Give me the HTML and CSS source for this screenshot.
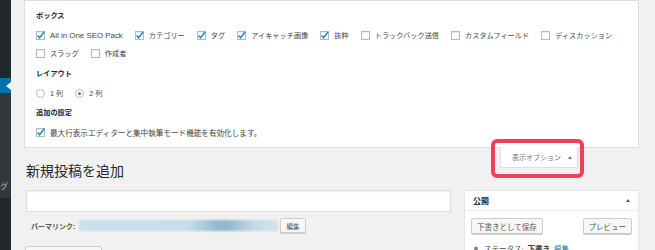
FILE: index.html
```html
<!DOCTYPE html>
<html lang="ja">
<head>
<meta charset="utf-8">
<title>新規投稿を追加</title>
<link rel="stylesheet" href="styles.css">
</head>
<body>
<div class="admin">
  <nav class="sidebar">
    <div class="menu-top"></div>
    <div class="menu-current"><span class="menu-arrow"></span></div>
    <div class="menu-sub"><span class="menu-tail">グ</span></div>
    <div class="menu-rest"></div>
  </nav>
  <main class="main">
    <section class="screen-panel">
      <div class="group">
        <h5 class="group-title">ボックス</h5>
        <div class="opt-row">
          <label class="opt"><span class="cb"><svg viewBox="0 0 9 9" class="tick"><polyline points="1.6,4.4 3.6,6.8 8.2,0.8"/></svg></span><span class="latin">All in One SEO Pack</span></label>
          <label class="opt"><span class="cb"><svg viewBox="0 0 9 9" class="tick"><polyline points="1.6,4.4 3.6,6.8 8.2,0.8"/></svg></span>カテゴリー</label>
          <label class="opt"><span class="cb"><svg viewBox="0 0 9 9" class="tick"><polyline points="1.6,4.4 3.6,6.8 8.2,0.8"/></svg></span>タグ</label>
          <label class="opt"><span class="cb"><svg viewBox="0 0 9 9" class="tick"><polyline points="1.6,4.4 3.6,6.8 8.2,0.8"/></svg></span>アイキャッチ画像</label>
          <label class="opt"><span class="cb"><svg viewBox="0 0 9 9" class="tick"><polyline points="1.6,4.4 3.6,6.8 8.2,0.8"/></svg></span>抜粋</label>
          <label class="opt"><span class="cb"></span>トラックバック送信</label>
          <label class="opt"><span class="cb"></span>カスタムフィールド</label>
          <label class="opt"><span class="cb"></span>ディスカッション</label>
        </div>
        <div class="opt-row opt-row-next">
          <label class="opt"><span class="cb"></span>スラッグ</label>
          <label class="opt"><span class="cb"></span>作成者</label>
        </div>
      </div>
      <div class="group group-layout">
        <h5 class="group-title">レイアウト</h5>
        <div class="opt-row">
          <label class="opt"><span class="rb"></span>1 列</label>
          <label class="opt"><span class="rb"><span class="rb-dot"></span></span>2 列</label>
        </div>
      </div>
      <div class="group group-extra">
        <h5 class="group-title">追加の設定</h5>
        <div class="opt-row">
          <label class="opt opt-wide"><span class="cb"><svg viewBox="0 0 9 9" class="tick"><polyline points="1.6,4.4 3.6,6.8 8.2,0.8"/></svg></span>最大行表示エディターと集中執筆モード機能を有効化します。</label>
        </div>
      </div>
    </section>

    <div class="title-row">
      <h1 class="page-title">新規投稿を追加</h1>
      <div class="screen-tab">表示オプション<span class="tab-tri"></span></div>
    </div>

    <div class="post-body">
      <div class="post-main">
        <div class="title-input"></div>
        <div class="permalink">
          <strong class="permalink-label">パーマリンク:</strong>
          <span class="permalink-url"></span>
          <span class="btn btn-mini">編集</span>
        </div>
        <div class="media-btn"></div>
      </div>
      <aside class="publish-box">
        <div class="publish-head">
          <span class="publish-title">公開</span>
          <span class="head-tri"></span>
        </div>
        <div class="publish-actions">
          <span class="btn">下書きとして保存</span>
          <span class="btn">プレビュー</span>
        </div>
        <div class="publish-status">
          <svg class="pin" viewBox="0 0 8 8"><circle cx="4" cy="2.5" r="2" fill="#82878c"/><path d="M1 8 Q1 5 4 5 Q7 5 7 8 Z" fill="#82878c"/></svg>
          <span>ステータス:</span><strong>下書き</strong><span class="link">編集</span>
        </div>
      </aside>
    </div>
  </main>
</div>
<div class="highlight"></div>
</body>
</html>
```

FILE: styles.css
```css
html, body {
  margin: 0;
  padding: 0;
}

body {
  width: 655px;
  height: 250px;
  overflow: hidden;
  background: #f1f1f1;
  font-family: "Liberation Sans", "Noto Sans CJK JP", sans-serif;
  font-size: 7.2px;
  color: #444;
  position: relative;
}

.admin {
  display: flex;
  height: 250px;
}

/* sidebar */
.sidebar {
  width: 11px;
  flex: none;
  display: flex;
  flex-direction: column;
  background: #23282d;
  overflow: hidden;
}

.menu-top {
  height: 78px;
  flex: none;
}

.menu-current {
  height: 15px;
  flex: none;
  background: #0073aa;
  display: flex;
  justify-content: flex-end;
  align-items: center;
}

.menu-arrow {
  width: 0;
  height: 0;
  border-top: 4px solid transparent;
  border-bottom: 4px solid transparent;
  border-right: 5px solid #f1f1f1;
}

.menu-sub {
  height: 105px;
  flex: none;
  background: #32373c;
  display: flex;
  justify-content: flex-end;
  align-items: flex-end;
  padding-bottom: 6px;
  box-sizing: border-box;
}

.menu-tail {
  color: #b4b9be;
  font-size: 7.7px;
  line-height: 10px;
  margin-right: 3px;
}

.menu-rest {
  flex: 1;
}

/* main */
.main {
  flex: 1;
  min-width: 0;
  padding: 0 16px 0 13px;
}

.screen-panel {
  background: #fff;
  border: 1px solid #ddd;
  padding: 9px 11px 8px;
}

.group-title {
  margin: 0 0 6px;
  font-size: 7.2px;
  line-height: 12px;
  font-weight: bold;
  color: #23282d;
}

.group-layout {
  margin-top: 8px;
}

.group-extra {
  margin-top: 7px;
}

.opt-row {
  display: flex;
  align-items: center;
  height: 14px;
}

.opt-row-next {
  margin-top: 4px;
}

.opt {
  display: flex;
  align-items: center;
  gap: 5px;
  margin-right: 12px;
  white-space: nowrap;
  color: #444;
}

.latin {
  font-size: 7.9px;
}

.opt-wide {
  font-size: 7.6px;
}

.cb {
  width: 7px;
  height: 7px;
  border: 1px solid #b4b9be;
  background: #fff;
  box-shadow: inset 0 1px 1px rgba(0, 0, 0, 0.08);
  display: flex;
}

.tick {
  width: 9px;
  height: 9px;
  margin: -1px 0 0 -1px;
  overflow: visible;
}

.tick polyline {
  fill: none;
  stroke: #1e8cbe;
  stroke-width: 1.5;
}

.rb {
  width: 7px;
  height: 7px;
  border: 1px solid #b4b9be;
  border-radius: 50%;
  background: #fff;
  display: flex;
  align-items: center;
  justify-content: center;
}

.rb-dot {
  width: 3px;
  height: 3px;
  border-radius: 50%;
  background: #1e8cbe;
}

/* title row */
.title-row {
  display: flex;
  justify-content: space-between;
  align-items: flex-start;
}

.page-title {
  margin: 14px 0 0 2px;
  font-size: 14px;
  line-height: 16px;
  font-weight: normal;
  color: #23282d;
  font-family: "Noto Sans CJK JP", sans-serif;
}

.screen-tab {
  margin: -1px 61px 0 0;
  width: 78px;
  height: 21px;
  box-sizing: border-box;
  background: #fff;
  border: 1px solid #ddd;
  border-top: none;
  display: flex;
  align-items: center;
  padding-left: 11px;
  font-size: 7px;
  color: #72777c;
}

.tab-tri {
  margin-left: 7px;
  width: 0;
  height: 0;
  border-left: 2px solid transparent;
  border-right: 2px solid transparent;
  border-bottom: 3px solid #72777c;
}

/* post body */
.post-body {
  display: flex;
  gap: 13px;
  margin-top: 12px;
  padding-left: 2px;
}

.post-main {
  width: 425px;
  flex: none;
}

.title-input {
  height: 22px;
  box-sizing: border-box;
  background: #fff;
  border: 1px solid #ddd;
  box-shadow: inset 0 1px 2px rgba(0, 0, 0, 0.07);
}

.permalink {
  display: flex;
  align-items: center;
  height: 15px;
  margin-top: 6px;
  padding-left: 5px;
}

.permalink-label {
  font-size: 7px;
  color: #555;
  font-weight: bold;
  width: 48px;
}

.permalink-url {
  width: 199px;
  height: 11px;
  background: linear-gradient(90deg, #cddfea 0%, #c9dce8 55%, #97bdd4 68%, #8fb8d0 74%, #c4d9e6 88%, #d3e3ec 100%);
  filter: blur(1px);
}

.btn {
  display: flex;
  align-items: center;
  justify-content: center;
  height: 16px;
  box-sizing: border-box;
  padding: 0 5px;
  background: #f7f7f7;
  border: 1px solid #ccc;
  border-radius: 2px;
  box-shadow: 0 1px 0 #ccc;
  color: #555;
  font-size: 7.5px;
  white-space: nowrap;
}

.btn-mini {
  margin-left: 2px;
  height: 15px;
  width: 26px;
  padding: 0;
  font-size: 6.5px;
}

.media-btn {
  margin-top: 13px;
  margin-left: -1px;
  width: 75px;
  height: 18px;
  background: #f7f7f7;
  border: 1px solid #ccc;
  border-radius: 2px;
}

/* publish box */
.publish-box {
  width: 175px;
  flex: none;
  box-sizing: border-box;
  background: #fff;
  border: 1px solid #e5e5e5;
  box-shadow: 0 1px 1px rgba(0, 0, 0, 0.04);
}

.publish-head {
  height: 20px;
  box-sizing: border-box;
  border-bottom: 1px solid #eee;
  display: flex;
  align-items: center;
  justify-content: space-between;
  padding: 0 8px;
}

.publish-title {
  font-weight: bold;
  font-size: 8px;
  color: #23282d;
}

.head-tri {
  width: 0;
  height: 0;
  border-left: 2px solid transparent;
  border-right: 2px solid transparent;
  border-bottom: 3px solid #555;
}

.publish-actions {
  display: flex;
  justify-content: space-between;
  padding: 0 6px;
  margin-top: 7px;
}

.publish-status {
  display: flex;
  align-items: center;
  gap: 4px;
  padding-left: 7px;
  margin-top: 10px;
  line-height: 12px;
  font-size: 7.5px;
  color: #444;
}

.pin {
  width: 8px;
  height: 8px;
}

.publish-status strong {
  font-weight: bold;
}

.link {
  color: #0073aa;
  text-decoration: underline;
}

/* annotation */
.highlight {
  position: absolute;
  left: 491px;
  top: 139px;
  width: 93px;
  height: 39px;
  box-sizing: border-box;
  border: 4px solid #ee4058;
  border-radius: 6px;
}
```
